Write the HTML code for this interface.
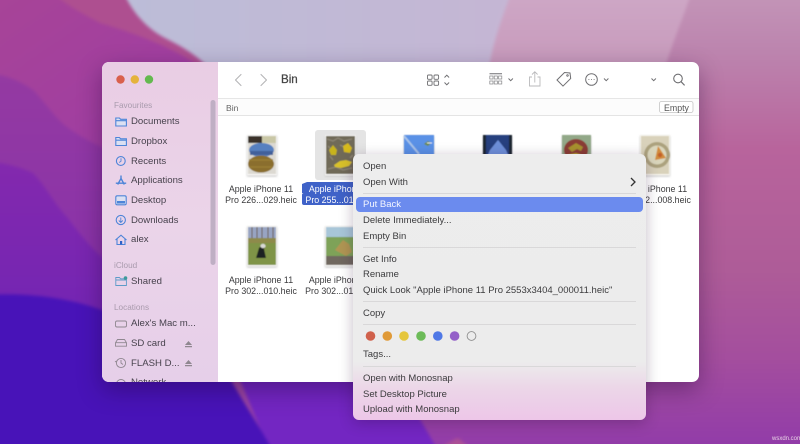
<!DOCTYPE html>
<html><head><meta charset="utf-8"><style>
html,body{margin:0;padding:0;width:800px;height:444px;overflow:hidden;background:#8a35a8}
body{position:relative;font-family:"Liberation Sans",sans-serif;color:#333}
svg{position:absolute;overflow:visible}
.t{position:absolute;white-space:nowrap;line-height:12px;transform:translateY(-5px)}
#bg{left:0;top:0;filter:blur(1.5px)}
#win{position:absolute;left:102px;top:62px;width:597px;height:320px;border-radius:7px;overflow:hidden;background:#fff;box-shadow:0 8px 24px rgba(30,0,50,.38)}
#side{position:absolute;left:0;top:0;width:116px;height:320px;background:linear-gradient(#e9cde4,#ebd4e9 50%,#e6cfe9)}
#wa{left:0;top:0}
.s{font-size:9.6px;color:#47424d}
.h{font-size:8.2px;color:#a99bad}
.l{font-size:8.85px;color:#3a3a3c;text-align:center;width:100px}
#menu{position:absolute;left:353px;top:154px;width:293px;height:266px;border-radius:6px;background:linear-gradient(#ededed 0,#ececec 78%,#ecd6e8 88%,#edc6e8 100%);box-shadow:0 3px 14px rgba(40,10,50,.28)}
.m{font-size:9.5px;color:#3b3b3d;left:10px}
.sep{position:absolute;left:10px;width:273px;height:1px;background:#d9d8d9}
.blur{position:absolute;left:0;top:0;width:800px;height:444px;filter:blur(.3px)}
</style></head><body>
<svg id="bg" width="800" height="444" viewBox="0 0 800 444">
<defs>
<linearGradient id="g1" x1="0" y1="0" x2="1" y2="0"><stop offset="0" stop-color="#bcbdd8"/><stop offset="1" stop-color="#c5b6d4"/></linearGradient>
<linearGradient id="g2" x1="0" y1="0" x2="0" y2="1"><stop offset="0" stop-color="#cfaac8"/><stop offset="1" stop-color="#c28eb2"/></linearGradient>
<linearGradient id="g3" x1="0" y1="0" x2="0" y2="1"><stop offset="0" stop-color="#c599ba"/><stop offset=".15" stop-color="#bc84ae"/><stop offset=".35" stop-color="#b8649c"/><stop offset=".6" stop-color="#ae5c98"/><stop offset=".78" stop-color="#a44e9e"/><stop offset="1" stop-color="#8e38ab"/></linearGradient>
<linearGradient id="g4" x1="0" y1="0" x2="1" y2="1"><stop offset="0" stop-color="#a84596"/><stop offset="1" stop-color="#9a38aa"/></linearGradient>
<linearGradient id="g5" x1="0" y1="0" x2="0" y2="1"><stop offset="0" stop-color="#943aa2"/><stop offset="1" stop-color="#8630ab"/></linearGradient>
<linearGradient id="g6" x1="0" y1="0" x2="0" y2="1"><stop offset="0" stop-color="#8329ae"/><stop offset="1" stop-color="#7024b4"/></linearGradient>
</defs>
<rect x="-20" y="-20" width="840" height="484" fill="url(#g3)"/>
<path d="M-20 -20H300V200H-20Z" fill="url(#g4)"/>
<path d="M42 -20C55 0 80 12 100 23C140 35 175 48 205 70H260L130 -20Z" fill="#ae4f90"/>
<path d="M120 -20C125 5 145 28 165 38C185 48 195 55 205 64C225 85 235 100 240 120H470C490 60 505 25 516 -20Z" fill="url(#g1)"/>
<path d="M516 -20C505 10 495 35 490 62C480 90 475 110 470 130H640C650 90 660 70 667 62C675 35 685 15 695 -20Z" fill="url(#g2)"/>
<path d="M-20 75H0C12 78 22 82 33 90C45 102 55 118 67 127C78 135 90 142 102 147L180 220V330H-20Z" fill="url(#g5)"/>
<path d="M-20 163H0C12 165 22 168 33 173C45 185 55 205 67 217C78 232 90 247 102 257L200 340V350H-20Z" fill="url(#g6)"/>
<path d="M180 330L240 380L275 464H445C430 435 415 410 395 380Z" fill="#7326c2"/>
<path d="M-20 295C20 293 60 295 102 310L200 345L232 382C245 405 262 430 280 464H-20Z" fill="#4813b8"/>
<path d="M425 464C432 452 445 444 458 438L490 464Z" fill="#ab4f95"/>
</svg>

<div id="win">
<div id="side"></div>
<svg id="wa" width="597" height="320" viewBox="102 62 597 320">
<defs>
<filter id="soft"><feGaussianBlur stdDeviation=".5"/></filter>
<filter id="sh"><feGaussianBlur stdDeviation="1"/></filter>
</defs>
<rect x="218" y="98.500" width="481" height="17" fill="#fcfcfc"/>
<rect x="218" y="98" width="481" height="1" fill="#e6e6e6"/>
<rect x="218" y="115" width="481" height="1" fill="#e4e4e4"/>
<circle cx="120.500" cy="79.500" r="4.200" fill="#d9604c"/><circle cx="134.800" cy="79.500" r="4.200" fill="#e5b33c"/><circle cx="149" cy="79.500" r="4.200" fill="#64b94f"/>
<rect x="210.500" y="100" width="5" height="165" rx="2.500" fill="#bfafc4"/>
<g fill="none" stroke="#4d84d8" stroke-width="1.100">
<path d="M115.800 126v-8h3.600l1.200 1.300h5.800v6.700z M115.800 120.700h10.600" fill="#dbe0f2"/>
<path d="M115.800 145.500v-8h3.600l1.200 1.300h5.800v6.700z M115.800 140.200h10.600" fill="#dbe0f2"/>
<circle cx="120.800" cy="161" r="4.400"/><path d="M121 158.300v2.900l-1.800 1.300" stroke-width=".9"/>
<path d="M121 175.500v3M117.700 184.500l3.300-6 3.300 6M115.800 183.200h10.400" stroke-width="1.400"/>
<rect x="115.800" y="195.800" width="10.400" height="9" rx="1.400" fill="#dbe0f2"/><rect x="117" y="201" width="8" height="2.500" fill="#4d84d8" stroke="none"/>
<circle cx="120.800" cy="220" r="4.600"/><path d="M120.800 217.500v4.500M118.800 220.500l2 2 2-2" stroke-width=".9"/>
<path d="M115.500 240l5.500-4.800 5.500 4.800M117 239v5.500h8v-5.500"/><rect x="120" y="241" width="2.200" height="3.500" fill="#2f62c8" stroke="none"/>
<path d="M115.800 285.500v-8h3.600l1.200 1.300h5.800v6.700z M115.800 280h10.600" stroke="#5d9bc8" stroke-width=".9"/><circle cx="125.500" cy="278" r="1.800" fill="#3e9a9a" stroke="none"/>
</g>
<g fill="none" stroke="#8f8790" stroke-width=".9">
<rect x="115.500" y="321" width="11" height="6" rx="1.500"/>
<path d="M117.500 339.500h7l2 3.200v3.500h-11v-3.500zM115.500 342.700h11"/>
<circle cx="121" cy="363" r="4.600"/><path d="M121 360v3l2 1.500M116.500 361l-1.500 1"/>
<circle cx="121" cy="384" r="4.500"/><path d="M116.500 384h9"/>
</g>
<path d="M185 345h7l-3.500-4zM185 346h7v1.200h-7zM185 364h7l-3.500-4zM185 365h7v1.200h-7z" fill="#8f8790"/>
<g fill="none" stroke="#b5b5b7" stroke-width="1.100" stroke-linecap="round" stroke-linejoin="round"><path d="M241 74.500l-5.500 5.500 5.500 5.500"/><path d="M261 74.500l5.500 5.500-5.500 5.500"/></g>
<g fill="none" stroke="#6f6f72" stroke-width=".9">
<rect x="427.500" y="75" width="4.600" height="4.300" rx="1"/><rect x="434" y="75" width="4.600" height="4.300" rx="1"/><rect x="427.500" y="81" width="4.600" height="4.300" rx="1"/><rect x="434" y="81" width="4.600" height="4.300" rx="1"/>
<path d="M444.500 77.500l2.300-2.300 2.300 2.300M444.500 82.500l2.300 2.300 2.300-2.300" stroke-width="1"/>
<path d="M489.500 73.800h12.500" stroke-width="1"/>
<g stroke="#858588" stroke-width=".7"><rect x="489.800" y="76" width="3.200" height="3"/><rect x="494.200" y="76" width="3.200" height="3"/><rect x="498.600" y="76" width="3.200" height="3"/><rect x="489.800" y="81" width="3.200" height="3"/><rect x="494.200" y="81" width="3.200" height="3"/><rect x="498.600" y="81" width="3.200" height="3"/></g>
<path d="M508.500 78.500l2.200 2.200 2.200-2.200" stroke-width="1"/>
<path d="M532 77h-2.500v9h10.500v-9h-2.500M534.800 82.500v-10.500M532 74.500l2.800-2.800 2.800 2.800" stroke="#b9b9bb"/>
<path d="M557 80l7.500-7.500 5.500.5.700 5.500-7.700 7.600z" stroke-width="1"/><circle cx="567.500" cy="75.500" r=".8"/>
<circle cx="591.500" cy="79.500" r="5.800" stroke-width="1"/>
<path d="M604 78.500l2.200 2.200 2.200-2.200M651.500 78.500l2.200 2.200 2.200-2.200" stroke-width="1"/>
<circle cx="678" cy="78.500" r="4.300" stroke-width="1.100"/><path d="M681.200 81.800l3.400 3.600" stroke-width="1.200"/>
</g>
<path d="M588.500 79.500h.8M591.100 79.500h.8M593.700 79.500h.8" stroke="#6f6f72" stroke-width="1"/>
<rect x="659.500" y="101.500" width="33.500" height="11" rx="2" fill="#fff" stroke="#c4c4c4" stroke-width=".8"/>
<rect x="315" y="130" width="51" height="50" rx="3" fill="#e4e4e4"/>
<g filter="url(#sh)" fill="#c9c9c9">
<rect x="247" y="136" width="30" height="40.500"/><rect x="325" y="136" width="31" height="40.500"/><rect x="404" y="136" width="30" height="22"/><rect x="483" y="136" width="29" height="22"/><rect x="562" y="136" width="29" height="22"/><rect x="640" y="136" width="30" height="40.500"/><rect x="247" y="227" width="30" height="40.500"/><rect x="325" y="227" width="31" height="40.500"/>
</g>
<g filter="url(#soft)">
<rect x="247" y="135" width="30" height="40.500" fill="#f7f6f4"/>
<rect x="248" y="136" width="28" height="38" fill="#dcd9d2"/>
<rect x="248" y="136" width="14" height="7" fill="#3a332c"/><rect x="262" y="136" width="14" height="7" fill="#c9c7a6"/>
<ellipse cx="261.500" cy="150" rx="12.500" ry="7" fill="#5680c0"/><rect x="250" y="151" width="23" height="4" fill="#43619a"/>
<ellipse cx="261" cy="164" rx="13" ry="8.500" fill="#8a6e2e"/><path d="M249 160h24M250 167h22" stroke="#9a7e36" stroke-width="1.500"/>

<rect x="325" y="135" width="31" height="40.500" fill="#f8f7f5"/>
<rect x="326" y="136" width="29" height="38" fill="#6f6a58"/>
<path d="M327 139l6 2 5-3 6 3 8-2M328 146l3 3M350 158l3-3M328 169l8-2 7 3 9-2M330 156l3 4M340 145l4 2" stroke="#8d8575" stroke-width="1.300" fill="none"/>
<path d="M329 150l4-5 4 5-1 5h-5z" fill="#c8b41c"/><path d="M343 146l5-3 4 5-2 5-6-1z" fill="#d6ba1c"/><path d="M334 165l6-4 6-1 6 2-3 4-8 2-6-1z" fill="#d8c12a"/>

<rect x="404" y="135" width="30" height="22" fill="#5a91e6"/>
<path d="M404 136l15 18" stroke="#a9c4e8" stroke-width="2"/><path d="M424 144l4-3 3 2-3 3z" fill="#6c8a4a"/><path d="M427 143h5" stroke="#e6eaf0"/>

<rect x="483" y="135" width="29" height="22" fill="#28407e"/>
<path d="M498 140l8 10 3 7h-22l3-7z" fill="#6d8fd8"/><rect x="483" y="135" width="3" height="22" fill="#1d2530"/><rect x="509" y="135" width="3" height="22" fill="#1d2530"/>

<rect x="562" y="135" width="29" height="22" fill="#92a888"/>
<ellipse cx="576" cy="150" rx="12" ry="11" fill="#8a3d35"/><path d="M568 148l8-5 7 4-2 4-4-2-5 3z" fill="#a8922e"/><path d="M566 155l10-2 10 3-2 2h-17z" fill="#b9a52c"/>

<rect x="640" y="135" width="30" height="40.500" fill="#f8f6ef"/>
<rect x="641" y="136" width="28" height="38" fill="#d9d2bb"/>
<circle cx="657" cy="155" r="13" fill="#aca27e"/><circle cx="657" cy="155" r="9.500" fill="#dad6bc"/>
<path d="M658 146l8 12-11 2z" fill="#d28c3c"/><circle cx="660" cy="155" r="2.200" fill="#c2602a"/>

<rect x="247" y="226" width="30" height="40.500" fill="#f6f5f2"/>
<rect x="248" y="227" width="28" height="38" fill="#7f9446"/>
<rect x="248" y="227" width="28" height="12" fill="#98a4c2"/>
<path d="M252 227v12M257 227v12M262 227v12M268 227v12M273 227v12" stroke="#6a5a45" stroke-width="1"/>
<rect x="248" y="238" width="28" height="5" fill="#8e8a4c"/>
<path d="M256 258l3-10 4-4 2 1-1 4 2 9z" fill="#1d2024"/><ellipse cx="263" cy="246" rx="2.600" ry="2.200" fill="#d9d9d6"/>

<rect x="325" y="226" width="31" height="40.500" fill="#f6f5f2"/>
<rect x="326" y="227" width="29" height="38" fill="#7ea258"/>
<rect x="326" y="227" width="29" height="10" fill="#a8c6d8"/>
<rect x="326" y="256" width="29" height="9" fill="#6f675e"/>
<path d="M335 250l8-10 6 4 3 8-6 4z" fill="#b09652"/>
</g>
<path d="M307 182h50v11h-55v-9z" fill="#3f62c8"/>
<path d="M302 195a2 2 0 0 1 2-2h52v12h-52a2 2 0 0 1-2-2z" fill="#3f62c8"/>
</svg>
</div>

<div class="blur">
<span class="t h" style="left:114px;top:104.500px">Favourites</span>
<span class="t s" style="left:131px;top:121px">Documents</span>
<span class="t s" style="left:131px;top:140.500px">Dropbox</span>
<span class="t s" style="left:131px;top:160.500px">Recents</span>
<span class="t s" style="left:131px;top:180px">Applications</span>
<span class="t s" style="left:131px;top:199.500px">Desktop</span>
<span class="t s" style="left:131px;top:219.500px">Downloads</span>
<span class="t s" style="left:131px;top:239px">alex</span>
<span class="t h" style="left:114px;top:264.500px">iCloud</span>
<span class="t s" style="left:131px;top:281px">Shared</span>
<span class="t h" style="left:114px;top:307px">Locations</span>
<span class="t s" style="left:131px;top:323px">Alex's Mac m...</span>
<span class="t s" style="left:131px;top:342.500px">SD card</span>
<span class="t s" style="left:131px;top:362.500px">FLASH D...</span>
<div style="position:absolute;left:102px;top:370px;width:116px;height:12px;overflow:hidden"><span class="t s" style="left:29px;top:12px">Network</span></div>

<span class="t" style="left:281px;top:79px;font-size:11.600px;color:#444;-webkit-text-stroke:.25px #444">Bin</span>
<span class="t" style="left:226px;top:107px;font-size:8.600px;color:#666">Bin</span>
<span class="t" style="left:664px;top:106.500px;font-size:8.800px;color:#555">Empty</span>

<span class="t l" style="left:211px;top:187.500px">Apple iPhone 11</span>
<span class="t l" style="left:211px;top:198.500px">Pro 226...029.heic</span>
<span class="t l" style="left:291px;top:187.500px;color:#fff">Apple iPhone 11</span>
<span class="t l" style="left:291px;top:198.500px;color:#fff">Pro 255...011.heic</span>
<span class="t l" style="left:605px;top:187.500px">Apple iPhone 11</span>
<span class="t l" style="left:605px;top:198.500px">Pro 302...008.heic</span>
<span class="t l" style="left:211px;top:279px">Apple iPhone 11</span>
<span class="t l" style="left:211px;top:290px">Pro 302...010.heic</span>
<span class="t l" style="left:291px;top:279px">Apple iPhone 11</span>
<span class="t l" style="left:291px;top:290px">Pro 302...012.heic</span>

<div id="menu">
<span class="t m" style="top:12px">Open</span>
<span class="t m" style="top:27.500px">Open With</span>
<svg width="8" height="10" style="left:276px;top:22.500px"><path d="M2 1l4 4-4 4" fill="none" stroke="#333" stroke-width="1.300"/></svg>
<div class="sep" style="top:39px"></div>
<div style="position:absolute;left:3px;top:42.500px;width:287px;height:15.500px;border-radius:4px;background:#6b8bee"></div>
<span class="t m" style="top:50px;color:#f4f6ff">Put Back</span>
<span class="t m" style="top:66px">Delete Immediately...</span>
<span class="t m" style="top:81.500px">Empty Bin</span>
<div class="sep" style="top:92.500px"></div>
<span class="t m" style="top:104.500px">Get Info</span>
<span class="t m" style="top:120px">Rename</span>
<span class="t m" style="top:135.500px">Quick Look "Apple iPhone 11 Pro 2553x3404_000011.heic"</span>
<div class="sep" style="top:146.500px"></div>
<span class="t m" style="top:159px">Copy</span>
<div class="sep" style="top:170px"></div>
<svg width="140" height="14" style="left:10px;top:175px">
<circle cx="7.500" cy="7" r="4.800" fill="#d0614c"/><circle cx="24.300" cy="7" r="4.800" fill="#e09a38"/><circle cx="41" cy="7" r="4.800" fill="#e5c63c"/><circle cx="58" cy="7" r="4.800" fill="#6cbb58"/><circle cx="74.800" cy="7" r="4.800" fill="#4f78e6"/><circle cx="91.600" cy="7" r="4.800" fill="#9460c8"/><circle cx="108.500" cy="7" r="4.400" fill="none" stroke="#8f8f8f" stroke-width=".9"/>
</svg>
<span class="t m" style="top:200px">Tags...</span>
<div class="sep" style="top:212px"></div>
<span class="t m" style="top:224px">Open with Monosnap</span>
<span class="t m" style="top:239.500px">Set Desktop Picture</span>
<span class="t m" style="top:255px">Upload with Monosnap</span>
</div>
<span class="t" style="left:772px;top:438px;font-size:6px;color:#e9d4e6">wsxdn.com</span>
</div>
</body></html>
